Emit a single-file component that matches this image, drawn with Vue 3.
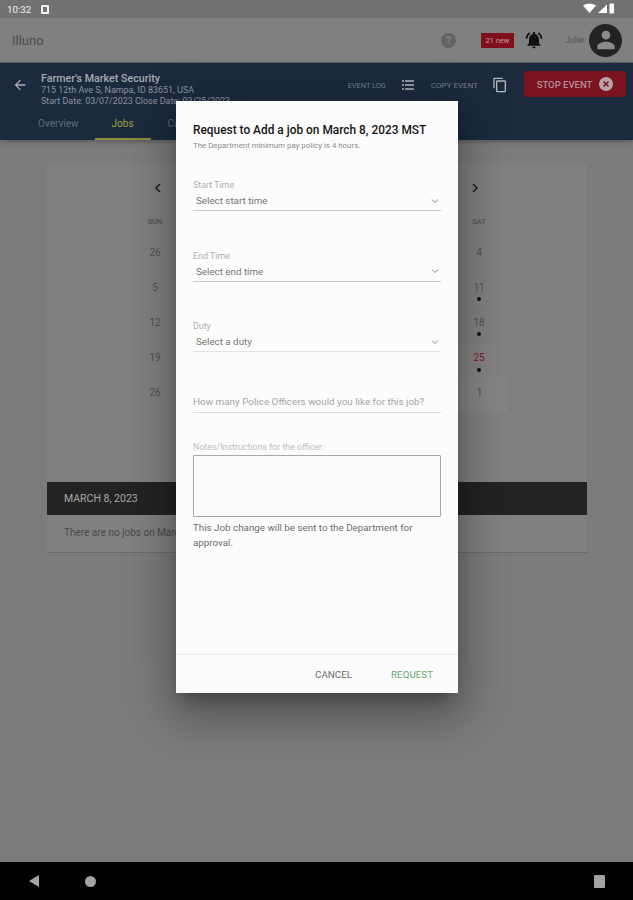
<template>
  <div class="screen">
    <div class="status">
      <span class="clock">10:32</span>
      <span class="notif"></span>
      <span class="spacer"></span>
      <svg width="31" height="12" viewBox="0 0 31 12">
        <path d="M0 2.500C3.500 0 9.500 0 13 2.500L6.500 10z" fill="#fff" />
        <path d="M15 10L24 1.500V10z" fill="#fff" />
        <rect x="26.500" y="0.500" width="4.500" height="10" rx="1" fill="#fff" />
      </svg>
    </div>

    <div class="toolbar">
      <span class="brand">Illuno</span>
      <span class="spacer"></span>
      <span class="help">?</span>
      <span class="badge">21 new</span>
      <svg class="bell" width="20" height="20" viewBox="0 0 24 24">
        <path d="M7.580 4.080L6.150 2.650C3.750 4.480 2.170 7.300 2.030 10.500h2a8.445 8.445 0 0 1 3.550-6.420zm12.390 6.420h2c-.15-3.200-1.730-6.020-4.120-7.850l-1.420 1.430a8.495 8.495 0 0 1 3.540 6.420zM18 11c0-3.070-1.640-5.640-4.500-6.320V4c0-.83-.67-1.500-1.500-1.500s-1.500.67-1.500 1.500v.68C7.630 5.360 6 7.920 6 11v5l-2 2v1h16v-1l-2-2v-5zm-6 11c.14 0 .27-.01.4-.04.65-.14 1.180-.58 1.440-1.180.1-.24.15-.5.15-.78h-4c.01 1.100.9 2 2.010 2z" fill="#111" />
      </svg>
      <span class="user">Julie</span>
      <span class="avatar">
        <svg width="26" height="26" viewBox="0 0 24 24">
          <path d="M12 3.500a4 4 0 1 1 0 8 4 4 0 0 1 0-8zM12 13.500c3.500 0 8 1.700 8 4.200v2.800H4v-2.800c0-2.500 4.500-4.200 8-4.200z" fill="#8a8a8a" />
        </svg>
      </span>
    </div>

    <div class="event">
      <div class="event-top">
        <svg class="back" width="16" height="16" viewBox="0 0 24 24">
          <path d="M20 11H7.800l5.600-5.600L12 4l-8 8 8 8 1.400-1.400L7.800 13H20z" fill="#a9adb3" />
        </svg>
        <div class="event-info">
          <div class="event-name">Farmer's Market Security</div>
          <div class="event-line">715 12th Ave S, Nampa, ID 83651, USA</div>
          <div class="event-line">Start Date: 03/07/2023 Close Date: 03/25/2023</div>
        </div>
        <span class="spacer"></span>
        <span class="event-action">EVENT LOG</span>
        <svg class="list-icon" width="12" height="10" viewBox="0 0 12 10">
          <path d="M0 0h2v2H0zM3 0h9v2H3zM0 4h2v2H0zM3 4h9v2H3zM0 8h2v2H0zM3 8h9v2H3z" fill="#8f949b" />
        </svg>
        <span class="event-action copy">COPY EVENT</span>
        <svg class="copy-icon" width="16" height="16" viewBox="0 0 24 24">
          <path d="M16 1H4c-1.100 0-2 .9-2 2v14h2V3h12zm3 4H8c-1.100 0-2 .9-2 2v14c0 1.100.9 2 2 2h11c1.100 0 2-.9 2-2V7c0-1.100-.9-2-2-2zm0 16H8V7h11z" fill="#b4b7bc" />
        </svg>
        <button class="stop">
          STOP EVENT
          <svg width="14" height="14" viewBox="0 0 14 14">
            <circle cx="7" cy="7" r="7" fill="#b9a3a6" />
            <path d="M4.500 4.500l5 5M9.500 4.500l-5 5" stroke="#741620" stroke-width="1.600" />
          </svg>
        </button>
      </div>
      <div class="tabs">
        <span class="tab">Overview</span>
        <span class="tab active">Jobs</span>
        <span class="tab">Calendar</span>
      </div>
    </div>

    <div class="body">
      <div class="card">
        <div class="month-nav">
          <svg width="8" height="10" viewBox="0 0 8 10"><path d="M6 1L2 5l4 4" fill="none" stroke="#1c1c1c" stroke-width="1.500" /></svg>
          <span class="month">March 2023</span>
          <svg width="8" height="10" viewBox="0 0 8 10"><path d="M2 1l4 4-4 4" fill="none" stroke="#1c1c1c" stroke-width="1.500" /></svg>
        </div>
        <div class="grid">
          <span v-for="d in weekdays" :key="d" class="wd">{{ d }}</span>
          <span
            v-for="(c, i) in cells"
            :key="i"
            class="day"
            :class="{ today: c.today, outside: c.outside }"
          >
            {{ c.n }}
            <i v-if="c.dot" class="dot"></i>
          </span>
        </div>
        <div class="date-bar">MARCH 8, 2023</div>
        <div class="no-jobs">There are no jobs on March 8, 2023</div>
      </div>
    </div>

    <div class="nav">
      <svg width="12" height="14" viewBox="0 0 12 14"><path d="M11 1v12L1 7z" fill="#a3a3a3" /></svg>
      <span class="home"></span>
      <span class="spacer"></span>
      <span class="recent"></span>
    </div>

    <div class="modal">
      <div class="modal-body">
        <h2>Request to Add a job on March 8, 2023 MST</h2>
        <p class="policy">The Department minimum pay policy is 4 hours.</p>

        <div v-for="f in selects" :key="f.label" class="field">
          <label>{{ f.label }}</label>
          <div class="select" :class="{ faint: f.faint }">
            <span>{{ f.text }}</span>
            <svg width="8" height="6" viewBox="0 0 8 6"><path d="M1 1.500l3 3 3-3" fill="none" stroke="#888" stroke-width="1" /></svg>
          </div>
        </div>

        <div class="count">How many Police Officers would you like for this job?</div>

        <label class="notes-label">Notes/Instructions for the officer:</label>
        <div class="notes"></div>
        <p class="hint">This Job change will be sent to the Department for approval.</p>
      </div>
      <div class="modal-actions">
        <span class="btn">CANCEL</span>
        <span class="btn ok">REQUEST</span>
      </div>
    </div>
  </div>
</template>

<script setup>
const weekdays = ['SUN', 'MON', 'TUE', 'WED', 'THU', 'FRI', 'SAT']

const selects = [
  { label: 'Start Time', text: 'Select start time' },
  { label: 'End Time', text: 'Select end time' },
  { label: 'Duty', text: 'Select a duty', faint: true },
]

const dotted = [11, 18, 25]

const cells = [26, 27, 28, 1, 2, 3, 4, 5, 6, 7, 8, 9, 10, 11, 12, 13, 14, 15, 16, 17, 18, 19, 20, 21, 22, 23, 24, 25, 26, 27, 28, 29, 30, 31, 1].map((n, i) => ({
  n,
  dot: i > 6 && dotted.includes(n),
  today: i === 27,
  outside: i === 34,
}))
</script>

<style>
html,
body {
  margin: 0;
  background: #7b7b7b;
}
</style>

<style scoped>
.screen {
  position: relative;
  width: 633px;
  height: 900px;
  display: flex;
  flex-direction: column;
  overflow: hidden;
  background: #7b7b7b;
  font-family: Roboto, "Liberation Sans", sans-serif;
}
.spacer {
  flex: 1;
}
.status {
  height: 18px;
  flex: none;
  display: flex;
  align-items: center;
  padding: 0 19px 0 7px;
  background: #727272;
  box-sizing: border-box;
}
.clock {
  font-size: 9.700px;
  color: #f2f2f2;
}
.notif {
  width: 8px;
  height: 9px;
  margin-left: 10px;
  box-sizing: border-box;
  border: 2.500px solid #f2f2f2;
  background: #777;
  border-radius: 1px;
}
.toolbar {
  height: 44px;
  flex: none;
  display: flex;
  align-items: center;
  padding: 0 11px 0 12px;
  background: #808080;
}
.brand {
  font-size: 13px;
  color: #4c4c4c;
}
.help {
  width: 15px;
  height: 15px;
  border-radius: 50%;
  background: #636363;
  color: #808080;
  font-size: 11px;
  font-weight: 700;
  text-align: center;
  line-height: 15px;
}
.badge {
  margin-left: 25px;
  width: 33px;
  height: 15px;
  background: #7f0f1d;
  color: #c69aa0;
  font-size: 7.500px;
  line-height: 15px;
  text-align: center;
}
.bell {
  margin-left: 10px;
}
.user {
  margin-left: 21px;
  font-size: 9px;
  color: #545454;
}
.avatar {
  width: 33px;
  height: 33px;
  margin-left: 5px;
  border-radius: 50%;
  background: #232323;
  display: flex;
  align-items: center;
  justify-content: center;
}
.event {
  height: 78px;
  flex: none;
  box-sizing: border-box;
  background: #1b2a3d;
  border-top: 1px solid #5c5c5c;
  display: flex;
  flex-direction: column;
  justify-content: space-between;
  box-shadow: 0 2px 4px rgba(0, 0, 0, 0.25);
  z-index: 1;
}
.event-top {
  display: flex;
  align-items: flex-start;
  padding: 8px 7px 0 12px;
}
.back {
  margin-top: 6px;
}
.event-info {
  margin-left: 13px;
  margin-top: 2px;
  color: #8d949e;
}
.event-name {
  font-size: 10.700px;
  line-height: 12px;
  font-weight: 500;
  color: #a6abb2;
}
.event-line {
  font-size: 8.950px;
  line-height: 10.500px;
}
.event-action {
  font-size: 7.400px;
  line-height: 13px;
  color: #777f8a;
  margin-top: 7.500px;
}
.event-action.copy {
  font-size: 8px;
  margin-left: 17px;
}
.list-icon {
  margin: 9px 0 0 16px;
}
.copy-icon {
  margin: 6px 0 0 14px;
}
.stop {
  margin-left: 16px;
  width: 102px;
  height: 26px;
  border: none;
  border-radius: 2px;
  background: #7a1220;
  color: #b48f95;
  font: 500 9.500px Roboto, "Liberation Sans", sans-serif;
  display: flex;
  align-items: center;
  justify-content: center;
  gap: 7px;
  padding: 0;
}
.tabs {
  display: flex;
  height: 29px;
  padding-left: 24px;
}
.tab {
  padding: 0 14px;
  min-width: 28px;
  font-size: 10px;
  line-height: 26px;
  color: #5f6a78;
  text-align: center;
  box-sizing: border-box;
}
.tab.active {
  margin: 0 3px 0 2px;
  width: 56px;
  color: #a3a445;
  border-bottom: 2px solid #8c8c40;
}
.body {
  flex: 1;
  padding: 23px 46px 0 47px;
}
.card {
  height: 389px;
  background: #808080;
  border-bottom: 1px solid #6a6a6a;
  display: flex;
  flex-direction: column;
}
.month-nav {
  display: flex;
  justify-content: space-between;
  align-items: center;
  padding: 20px 108px 0 107px;
  height: 10px;
}
.month {
  font-size: 12px;
  color: #2b2b2b;
}
.grid {
  display: grid;
  grid-template-columns: repeat(7, 54px);
  grid-template-rows: 25px;
  grid-auto-rows: 35px;
  margin: 19px 0 0 81px;
  height: 270px;
  align-content: start;
}
.wd {
  font-size: 7.500px;
  color: #4a4a4a;
  text-align: center;
  line-height: 20px;
}
.day {
  position: relative;
  font-size: 10px;
  color: #505050;
  text-align: center;
  line-height: 32px;
}
.day.today {
  color: #7c2030;
  background: #858282;
  margin: 1px 10px -1px 0;
  padding-left: 10px;
  line-height: 30px;
}
.day.outside {
  background: #858585;
  margin-right: -1px;
}
.dot {
  position: absolute;
  left: 50%;
  top: 25px;
  width: 4px;
  height: 4px;
  margin-left: -2px;
  border-radius: 50%;
  background: #111;
}
.day.today .dot {
  left: calc(50% + 5px);
}
.date-bar {
  height: 33px;
  flex: none;
  box-sizing: border-box;
  padding-left: 17px;
  background: #232323;
  color: #a8a8a8;
  font-size: 10.500px;
  line-height: 33px;
}
.no-jobs {
  padding: 12px 17px;
  font-size: 10px;
  color: #4a4a4a;
}
.nav {
  height: 38px;
  flex: none;
  display: flex;
  align-items: center;
  padding: 0 28px;
  background: #000;
}
.home {
  width: 11px;
  height: 11px;
  margin-left: 45px;
  border-radius: 50%;
  background: #a3a3a3;
}
.recent {
  width: 11px;
  height: 13px;
  border-radius: 1px;
  background: #a3a3a3;
}
.modal {
  position: absolute;
  left: 176px;
  top: 101px;
  width: 282px;
  height: 592px;
  display: flex;
  flex-direction: column;
  background: #fcfcfc;
  box-shadow: 0 11px 15px -7px rgba(0, 0, 0, 0.3), 0 24px 38px 3px rgba(0, 0, 0, 0.2), 0 9px 46px 8px rgba(0, 0, 0, 0.15);
  z-index: 2;
}
.modal-body {
  flex: 1;
  padding: 22px 17px 0 17px;
}
h2 {
  margin: 0;
  font-size: 11.900px;
  line-height: 14px;
  font-weight: 500;
  color: #161616;
  white-space: nowrap;
}
.policy {
  margin: 3px 0 0;
  font-size: 7.900px;
  line-height: 11px;
  color: #8d8d8d;
}
.field {
  height: 70.700px;
}
.field:first-of-type {
  margin-top: 29px;
}
.field label {
  display: block;
  font-size: 8.900px;
  line-height: 11px;
  color: #b0b0b0;
}
.select {
  display: flex;
  align-items: center;
  justify-content: space-between;
  height: 19px;
  padding: 0 2px 0 3px;
  border-bottom: 1px solid #c9c9c9;
  font-size: 9.800px;
  color: #767676;
}
.select.faint {
  border-bottom-color: #e4e4e4;
}
.count {
  height: 20px;
  font-size: 9.900px;
  line-height: 19px;
  color: #a4a4a4;
  border-bottom: 1px solid #dcdcdc;
  white-space: nowrap;
}
.notes-label {
  display: block;
  margin-top: 29px;
  font-size: 8.850px;
  line-height: 11px;
  color: #c0c0c0;
}
.notes {
  width: 246px;
  height: 60px;
  margin-top: 2px;
  border: 1px solid #a8a8a8;
  border-radius: 1px;
}
.hint {
  margin: 3px 0 0;
  font-size: 9.800px;
  line-height: 15px;
  color: #6e6e6e;
  width: 240px;
}
.modal-actions {
  height: 38px;
  flex: none;
  display: flex;
  justify-content: flex-end;
  align-items: center;
  gap: 39px;
  padding: 0 25px 0 0;
  border-top: 2px solid #f0f0f0;
}
.btn {
  font-size: 9.800px;
  color: #6a6a6a;
}
.btn.ok {
  color: #6fa76f;
}
</style>
